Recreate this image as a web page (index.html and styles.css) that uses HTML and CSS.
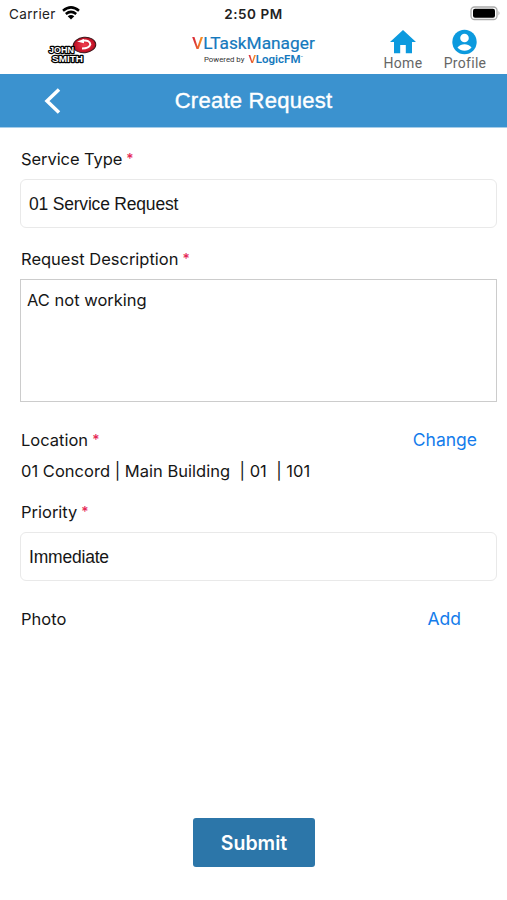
FILE: index.html
```html
<!DOCTYPE html>
<html lang="en">
<head>
<meta charset="utf-8">
<title>Create Request</title>
<link rel="stylesheet" href="styles.css">
</head>
<body>
<div class="status">
  <div class="carrier"><span>Carrier</span>
    <svg width="18" height="14" viewBox="0 0 18 14" fill="none" stroke="#000" stroke-width="2.5"><path d="M1 4.8Q9-2 17 4.8"/><path d="M3.8 8Q9 3.7 14.2 8"/><path d="M9 13.5L5.7 10.2Q9 7.7 12.3 10.2Z" fill="#000" stroke="none"/></svg>
  </div>
  <span class="time">2:50 PM</span>
  <svg class="battery" width="31" height="15" viewBox="0 0 31 15"><rect x="1" y="1" width="26" height="12.5" rx="3.5" fill="#fff" stroke="#aaa" stroke-width="1.3"/><rect x="3" y="2.8" width="22" height="9" rx="2" fill="#000"/><path d="M28.5 5q2 2.2 0 4.500z" fill="#aaa"/></svg>
</div>
<header class="brandbar">
  <svg class="logo" width="52" height="28" viewBox="0 0 52 28">
    <defs><radialGradient id="red"><stop offset="0" stop-color="#f04050"/><stop offset="1" stop-color="#bb0b20"/></radialGradient></defs>
    <ellipse cx="37.500" cy="9" rx="11.300" ry="7.700" fill="url(#red)" stroke="#3b171b" stroke-width="1" transform="rotate(-5 37.500 9)"/>
    <path d="M35 4.800Q43 3.500 43.300 8.500Q42 12.500 35 12.500" fill="none" stroke="#fff" stroke-width="2"/>
    <path d="M37 3l-7 2.500 7 1.800z" fill="#fff"/>
    <g class="logo-text"><text x="2" y="16.800" textLength="25" lengthAdjust="spacingAndGlyphs">JOHN</text><text x="5" y="25.500" textLength="31" lengthAdjust="spacingAndGlyphs">SMITH</text></g>
  </svg>
  <div class="brand">
    <div class="product"><span class="vee">V</span>LTaskManager</div>
    <div class="powered"><span>Powered by</span><b><span class="vee">V</span>LogicFM</b><sup>™</sup></div>
  </div>
  <nav class="nav">
    <div class="nav-item home"><svg width="28" height="24" viewBox="0 0 28 24" fill="#0c9ade"><path d="M14 0L27 12H23V23.300H16.800V15H11.200V23.300H5V12H1L14 0Z"/></svg><span>Home</span></div>
    <div class="nav-item profile"><svg width="26" height="26" viewBox="0 0 26 26"><circle cx="12.500" cy="13" r="12.200" fill="#0c9ade"/><circle cx="12.500" cy="9" r="4.300" fill="#fff"/><path d="M5.500 18.500Q8.500 15.200 12.500 15.200T19.500 18.500Q16.500 21.800 12.500 21.800T5.500 18.500Z" fill="#fff"/></svg><span>Profile</span></div>
  </nav>
</header>
<div class="titlebar">
  <svg class="back" width="17" height="26" viewBox="0 0 17 26" fill="none" stroke="#fff" stroke-width="3.500"><path d="M15 1.500L3 13L15 24.500"/></svg>
  <h1>Create Request</h1>
</div>
<main class="form">
  <div class="label service">Service Type<i>*</i></div>
  <div class="field">01 Service Request</div>
  <div class="label desc">Request Description<i>*</i></div>
  <div class="area">AC not working</div>
  <div class="row location"><div class="label">Location<i>*</i></div><a class="change">Change</a></div>
  <div class="place">01 Concord | Main Building&nbsp; | 01&nbsp; | 101</div>
  <div class="label priority">Priority<i>*</i></div>
  <div class="field immediate">Immediate</div>
  <div class="row photo"><div class="label">Photo</div><a class="add">Add</a></div>
  <button class="submit">Submit</button>
</main>
</body>
</html>
```
FILE: styles.css
```css
* { box-sizing: border-box; }
body { margin: 0; width: 507px; height: 900px; overflow: hidden; background: #fff; color: #161616; font-family: Inter, sans-serif; }
.status { height: 27px; display: grid; grid-template-columns: 1fr auto 1fr; align-items: center; font-size: 13.5px; color: #222; }
.carrier { display: flex; align-items: center; gap: 6px; padding-left: 9px; letter-spacing: .35px; }
.carrier svg { margin-top: -2px; }
.time { font-weight: 600; letter-spacing: .55px; }
.battery { justify-self: end; margin-right: 6px; }
.brandbar { height: 47px; display: flex; align-items: flex-start; }
.logo { margin: 9px 0 0 47px; flex: none; }
.logo-text { font: bold 8.8px "Liberation Sans", sans-serif; fill: #fff; stroke: #000; stroke-width: 2.4px; paint-order: stroke; stroke-linejoin: round; }
.brand { margin: 6px 0 0 93px; width: 124px; font-family: Roboto, sans-serif; color: #1579bd; }
.product { font-size: 17.3px; line-height: 20px; letter-spacing: 0; font-weight: 400; -webkit-text-stroke: .2px; white-space: nowrap; }
.product .vee { -webkit-text-stroke: 0; font-weight: 500; }
.vee { background: linear-gradient(90deg, #db3038 20%, #f58a22 80%); background-clip: text; color: transparent; }
.powered { display: flex; align-items: center; gap: 4px; margin-left: 12px; font-size: 7.8px; line-height: 13px; color: #333; white-space: nowrap; }
.powered b { font-size: 11.5px; font-weight: 600; color: #1579bd; }
.powered sup { font-size: 4px; line-height: 4px; margin: -4px 0 0 -4px; color: #1579bd; }
.nav { display: flex; margin-left: 65px; font: 14px/16px Roboto, sans-serif; color: #666; }
.nav-item { width: 44px; height: 47px; display: flex; flex-direction: column; align-items: center; justify-content: space-between; padding: 3px 0 3px; }
.home { letter-spacing: .35px; }
.profile { margin-left: 18px; letter-spacing: .3px; padding-top: 2px; }
.titlebar { height: 54px; background: #3b92cf; border-bottom: 1px solid #a6cde9; display: grid; grid-template-columns: 1fr auto 1fr; align-items: center; color: #fff; }
.back { margin-left: 44px; }
h1 { margin: 0; font: 22px/26px "Liberation Sans", sans-serif; letter-spacing: .25px; -webkit-text-stroke: .4px #fff; }
.form { padding: 19px 10px 0 20px; font-size: 16.5px; display: flex; flex-direction: column; }
.label, .place { line-height: 22px; white-space: pre; padding-left: 1px; letter-spacing: 0; }
.service { letter-spacing: -.08px; padding-top: 1px; margin-bottom: -1px; }
.label i { color: #e52856; font-style: normal; margin-left: 4px; font-size: 14px; font-weight: 500; position: relative; top: -1px; }
.field { margin-top: 9px; height: 49px; border: 1px solid #e9e9e9; border-radius: 6px; padding: 1px 8px 0; font: 17.500px/47px "Liberation Sans", sans-serif; letter-spacing: -.2px; }
.desc { margin-top: 20px; }
.area { margin-top: 8px; height: 123px; border: 1px solid #ccc; padding: 9px 6px; line-height: 22px; }
.row { display: flex; justify-content: space-between; align-items: center; height: 24px; }
.location { margin-top: 26px; }
a { color: #147ceb; font-size: 17.500px; padding-bottom: 2px; }
.change { margin-right: 20px; }
.add { margin-right: 36px; }
.place { margin-top: 8px; letter-spacing: .02px; }
.priority { margin-top: 19px; }
.immediate { margin-top: 8px; }
.photo { margin-top: 26px; }
.submit { align-self: center; margin: 187px 0 0 -9px; width: 122px; height: 49px; border: 0; border-radius: 3px; background: #2c76a9; color: #fff; font: 600 19.5px Inter, sans-serif; padding: 0; }
```
